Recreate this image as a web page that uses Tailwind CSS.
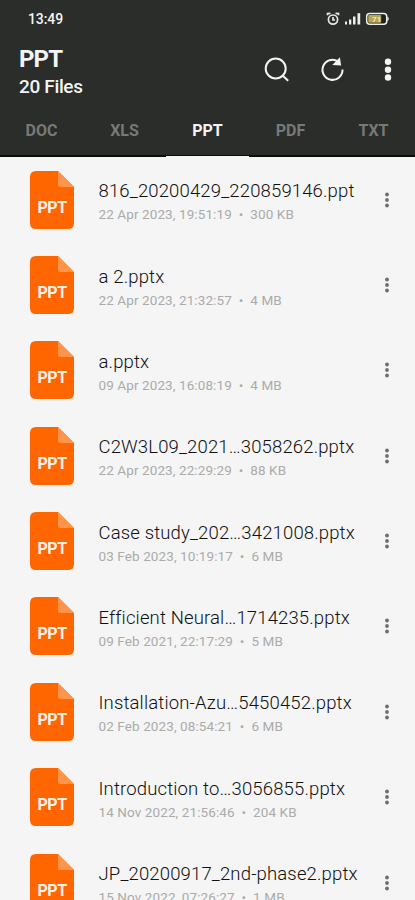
<!DOCTYPE html>
<html lang="en">
<head>
<meta charset="utf-8">
<title>Files</title>
<script src="https://cdn.jsdelivr.net/npm/@tailwindcss/browser@4"></script>
</head>
<body class="bg-[#f5f5f5] font-[Roboto,sans-serif] h-[900px] overflow-hidden">
<div class="w-[415px] h-[900px] overflow-hidden flex flex-col">
  <header class="bg-[#2b2d2a] h-[157px] shrink-0 flex flex-col text-[#f4f4f4]">
    <div class="h-[38px] pl-[28px] pr-[25px] flex items-center justify-between">
      <span class="text-[14px] leading-4 font-medium tracking-[-0.1px]">13:49</span>
      <svg class="w-[64px] h-[14px] shrink-0" viewBox="0 0 64 14" fill="none">
        <g stroke="#e8e8e8" stroke-width="1.7"><circle cx="7" cy="7.600" r="4.600"/><path d="M1.500 3.200V1.600L4.500 1.400M12.500 3.200V1.600L9.500 1.400M7 5v3H9"/></g>
        <g fill="#eee"><rect x="19" y="9.500" width="2" height="3"/><rect x="23" y="7.500" width="2.300" height="5"/><rect x="27" y="4.500" width="2.500" height="8"/><rect x="31.500" y="1.200" width="2.700" height="11.300"/></g>
        <rect x="40.700" y="1.500" width="20" height="10.800" rx="3" fill="#20201c" stroke="#eee" stroke-width="1.500"/>
        <rect x="42.200" y="3" width="13" height="7.800" rx="1" fill="#b5a653"/>
        <path d="M61.300 4.300q3 2.500 0 5.200z" fill="#eee"/>
        <text x="50.700" y="9.900" text-anchor="middle" font-size="8" font-weight="700" fill="#f0e8c0">71</text>
      </svg>
    </div>
    <div class="h-[66px] pl-[19px] flex">
      <div class="w-[245px] pt-[7px]">
        <h1 class="text-[24px] leading-[28px] font-bold tracking-[-0.9px]">PPT</h1>
        <p class="text-[19px] leading-[28px] tracking-[-0.350px] font-medium">20 Files</p>
      </div>
      <svg class="w-[26px] h-[26px] mt-[18px]" viewBox="0 0 26 26" fill="none" stroke="#f4f4f4" stroke-width="2"><circle cx="11.700" cy="12.500" r="10"/><path d="m18.800 19.700 5.400 5"/></svg>
      <svg class="w-[26px] h-[26px] mt-[18px] ml-[30px]" viewBox="0 0 26 26" fill="none" stroke="#f4f4f4" stroke-width="2"><path d="M18 5.500A10 10 0 1 0 22.500 13.500"/><path d="m19.200 3.300.800 5.200-5.500-.300z" fill="#f4f4f4"/></svg>
      <svg class="w-[8px] h-[26px] mt-[18px] ml-[37.500px]" viewBox="0 0 8 26" fill="#f4f4f4"><circle cx="4" cy="5.800" r="3.200"/><circle cx="4" cy="13.700" r="3.200"/><circle cx="4" cy="21.500" r="3.200"/></svg>
    </div>
    <nav class="h-[53px] grid grid-cols-5 text-center text-[16px] leading-[53px] font-bold text-[#777976] border-b-2 border-[#0c0d0b]">
      <span>DOC</span><span>XLS</span><span class="relative text-[#f4f4f4]">PPT<i class="absolute left-0 -bottom-[2px] w-full h-[4px] bg-[#f5f5f5] border-t border-[#0c0d0b]"></i></span><span>PDF</span><span>TXT</span>
    </nav>
  </header>
  <main id="files" class="flex flex-col"></main>
</div>
<template id="row">
  <div class="h-[85.360px] shrink-0 pl-[30px] flex items-center">
    <svg class="w-[44px] h-[58px] shrink-0" viewBox="0 0 44 58"><path d="M6 0H28L44 16V52Q44 58 38 58H6Q0 58 0 52V6Q0 0 6 0Z" fill="#ff6600"/><path d="M28 0 44 16H30Q28 16 28 14Z" fill="#ff944d"/><text x="22.300" y="41.500" text-anchor="middle" font-size="16" font-weight="700" textLength="29.500" fill="#fff4ec">PPT</text></svg>
    <div class="ml-[24.500px] w-[284px] pt-[4px] whitespace-nowrap">
      <div class="name text-[18.500px] leading-[26px] text-[#101010] font-light tracking-[0.150px]"></div>
      <div class="info text-[13.500px] leading-[21px] text-[#ababab] tracking-[0.100px]"></div>
    </div>
    <svg class="w-[8px] h-[18px] shrink-0" viewBox="0 0 8 18" fill="#6e6e6e"><circle cx="4" cy="3.500" r="1.900"/><circle cx="4" cy="9" r="1.900"/><circle cx="4" cy="14.500" r="1.900"/></svg>
  </div>
</template>
<script>
const files = [
  ["816_20200429_220859146.ppt", "22 Apr 2023, 19:51:19", "300 KB"],
  ["a 2.pptx", "22 Apr 2023, 21:32:57", "4 MB"],
  ["a.pptx", "09 Apr 2023, 16:08:19", "4 MB"],
  ["C2W3L09_2021…3058262.pptx", "22 Apr 2023, 22:29:29", "88 KB"],
  ["Case study_202…3421008.pptx", "03 Feb 2023, 10:19:17", "6 MB"],
  ["Efficient Neural…1714235.pptx", "09 Feb 2021, 22:17:29", "5 MB"],
  ["Installation-Azu…5450452.pptx", "02 Feb 2023, 08:54:21", "6 MB"],
  ["Introduction to…3056855.pptx", "14 Nov 2022, 21:56:46", "204 KB"],
  ["JP_20200917_2nd-phase2.pptx", "15 Nov 2022, 07:26:27", "1 MB"]
];
for (const [name, date, size] of files) {
  const row = document.getElementById("row").content.cloneNode(true);
  row.querySelector(".name").textContent = name;
  row.querySelector(".info").textContent = date + "\u00a0 •\u00a0 " + size;
  document.getElementById("files").append(row);
}
</script>
</body>
</html>
